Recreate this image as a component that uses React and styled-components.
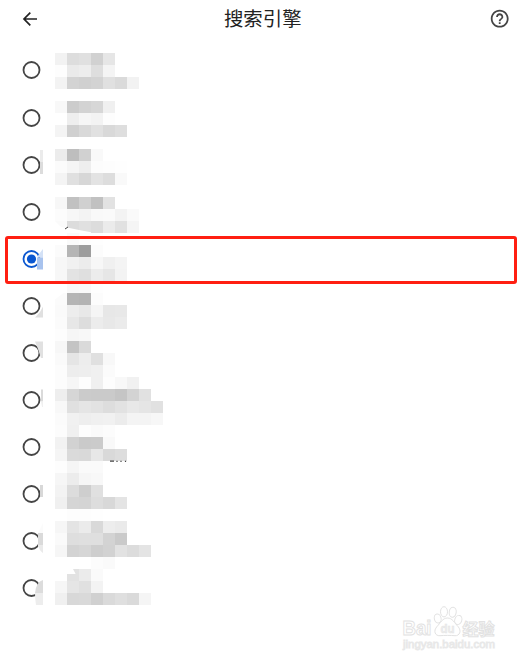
import styled, { createGlobalStyle } from 'styled-components';
import { MdHelpOutline } from 'react-icons/md';

const GlobalStyle = createGlobalStyle`
  body {
    margin: 0;
    background: #fff;
    font-family: 'Noto Sans CJK SC', sans-serif;
  }
`;

const Page = styled.main`
  position: relative;
  width: 525px;
  height: 663px;
  background: #fff;
  overflow: hidden;
`;

const Header = styled.header`
  display: grid;
  grid-template-columns: 24px 1fr 24px;
  align-items: center;
  height: 37px;
  padding: 0 13.5px 0 18px;
`;

const IconBtn = styled.button`
  display: flex;
  align-items: center;
  justify-content: center;
  padding: 0;
  border: none;
  background: transparent;
  color: ${(p) => p.$color};
`;

const Title = styled.h1`
  margin: 0 4px 2px 0;
  text-align: center;
  font-size: 19.4px;
  font-weight: 400;
  line-height: 34px;
  color: #222;
`;

const Content = styled.div`
  display: grid;
  grid-template-columns: 23px 108px;
  column-gap: 12px;
  align-items: start;
  padding: 9.5px 0 0 20px;
`;

const Options = styled.ul`
  margin: 0;
  padding: 0.4px 0 0;
  list-style: none;
`;

const Option = styled.li`
  display: flex;
  align-items: center;
  height: 47.1px;
`;

const RadioSvg = styled.svg`
  display: block;
  width: 23px;
  height: 24px;
  overflow: visible;
`;

const Mosaic = styled.div`
  display: grid;
  grid-template-columns: repeat(9, 12px);
  grid-auto-rows: 12px;
  margin-top: 6.5px;
`;

const Cell = styled.span`
  background: ${(p) => p.$tone};
  clip-path: ${(p) => p.$clip || 'none'};
`;

const Highlight = styled.div`
  position: absolute;
  top: 236px;
  left: 5px;
  box-sizing: border-box;
  width: 512px;
  height: 48px;
  border: 3px solid #ff1f12;
  border-radius: 3px;
`;

const Scraps = styled.svg`
  position: absolute;
  top: ${(p) => p.$top}px;
  left: ${(p) => p.$left}px;
`;

const Watermark = styled.svg`
  position: absolute;
  top: 602px;
  left: 398px;
  font-family: 'Liberation Sans', 'Noto Sans CJK SC', sans-serif;
`;

// shapes left over each radio, [path, fill]
const options = [
  [],
  [],
  [['M20-3H23V9H20z', '#ebebeb'], ['M20 9H23V21H20z', '#dcdcdc']],
  [],
  [['M23 2L19 7L17 10.5H23z', '#d3e1f6'], ['M17 10.5H23V22.5H17z', '#a8c3ee']],
  [['M23 12.5L20 18L15 23.5H23z', '#e0e0e0']],
  [['M15 .5H23V17H21L18 8z', '#e1e1e1']],
  [['M21 1.5H23V13.5H21z', '#dadada'], ['M21 13.5H23V19H22z', '#f0f0f0']],
  [],
  [['M20 3H23V15H20z', '#d8d8d8']],
  [['M18 4L23-6V24L20 21L18 16z', '#fbfbfb'], ['M18 4H23V16H18z', '#dadada'], ['M18 16H23V24Q19 21 18 16z', '#eaeaea']],
  [['M23 4Q16 6 15 17H23z', '#dcdcdc'], ['M15 17H23V29H16Q15 23 15 17z', '#ededed']],
];

const tones = [
  'f2 dd e0 d1 e6',
  'fd ea ed de f4',
  'f3 d3 d0 d3 e0 da f2',
  '',
  'f8 cc d3 d7 f0',
  'ff ee f6 f3 fd',
  'f4 d0 d9 e1 d9 de',
  '',
  'ec be d1 f9',
  'fb f5 ee fc fd fe',
  'f4 e0 d7 e3 dd f9',
  '',
  'f7 c1 d0 c1 e2',
  'fc f7 f3 f9 fa f3 fa',
  'fa dc e0 dc eb e1 f5',
  'ff fa fd fe',
  'fb b5 9d fc',
  'f7 f1 ec f7 f0 f4',
  'f7 e3 df ec e6 f3',
  'ff f8 f9 fe',
  'fb b5 b3 fc',
  'fa ed e8 f5 e7 e8',
  'fb e7 dd ec e8 eb',
  'fd f6 f8',
  'f7 c4 da',
  'fa e5 ed e0 f8',
  'fc ed ee f0 fb',
  'fc f6 fd f0 fd f8 f1',
  'ee d6 cb ca ca c5 d3 e1',
  'f8 e0 e5 e2 dd e2 e8 e5 e1',
  'fb f1 ee f0 f1 ec f4 f4 f7',
  'fc f0 fd fa fc',
  'f2 d2 ca cb f9',
  'f5 da d9 e7 d9 dd',
  'fd f5 fa fa',
  'f6 ec f6 f8',
  'f3 dc ce e0',
  'f0 d5 d4 dd d8 e4',
  'ff fd fd fe',
  'f6 e4 eb d9 ed ea',
  'fa de df df d3 ca',
  'f6 d3 d6 ce d2 e2 dc e4',
  'ff ff ff fc fa',
  'ff e2 eb fa',
  'f6 e5 e0 f3',
  'f0 d8 d9 d0 da df da f5',
];

const clips = {
  '14-0': 'polygon(0 0, 100% 0, 100% 65%, 45% 45%)',
  '14-1': 'polygon(0 0, 100% 0, 100% 75%, 0 55%)',
  '14-2': 'polygon(0 0, 100% 0, 100% 94%, 0 75%)',
  '20-0': 'polygon(70% 0, 100% 0, 100% 100%, 0 100%, 0 55%)',
  '43-1': 'polygon(50% 0, 100% 0, 100% 100%, 0 100%, 0 42%, 72% 42%)',
};

const cells = tones.flatMap((row, r) =>
  Array.from({ length: 9 }, (_, c) => {
    const v = row.split(' ')[c];
    return { key: `${r}-${c}`, tone: v ? `#${v}${v}${v}` : 'transparent' };
  })
);

function Radio({ checked, marks }) {
  const color = checked ? '#0b57d0' : '#454545';
  return (
    <RadioSvg viewBox="0 0 23 24" role="radio" aria-checked={checked}>
      <circle cx="11.5" cy="12" r="8" fill="none" stroke={color} strokeWidth="1.8" />
      {checked && <circle cx="11.5" cy="12" r="4.6" fill={color} />}
      {marks.map(([d, fill]) => (
        <path key={d} d={d} fill={fill} />
      ))}
    </RadioSvg>
  );
}

function BaiduMark() {
  return (
    <Watermark width="102" height="52" viewBox="0 0 102 52" aria-hidden="true">
      <g fill="#fff" stroke="#e2e2e2" strokeWidth="1">
        <text x="4.500" y="33" fontSize="21" fontWeight="700" textLength="29" lengthAdjust="spacingAndGlyphs">Bai</text>
        <ellipse cx="39.7" cy="16.500" rx="3.4" ry="4.6" transform="rotate(-12 39.7 16.5)" />
        <ellipse cx="46" cy="9.800" rx="3.5" ry="5.1" />
        <ellipse cx="54.700" cy="10.200" rx="3.5" ry="5" transform="rotate(8 54.7 10.2)" />
        <ellipse cx="60.300" cy="18" rx="3.5" ry="4.7" transform="rotate(18 60.3 18)" />
        <path d="M49.500 16C54.500 16 56.500 21 60 24.500C64 29 61.500 34 57 33.700C53 33.300 46 33.300 42 33.700C37 34 35 29 39 24.500C42.500 21 44.500 16 49.500 16z" />
        <text x="42.500" y="31" fontSize="13" fontWeight="700" textLength="14" lengthAdjust="spacingAndGlyphs" fill="#eee" stroke="#e4e4e4" strokeWidth=".5">du</text>
        <text x="64.500" y="32.500" fontSize="16" fontWeight="700">经验</text>
      </g>
      <text x="5" y="45.500" fontSize="10" fill="#fff" stroke="#e8e8e8" strokeWidth=".8" textLength="92" lengthAdjust="spacingAndGlyphs">jingyan.baidu.com</text>
    </Watermark>
  );
}

export default function App() {
  return (
    <Page>
      <GlobalStyle />
      <Header>
        <IconBtn type="button" aria-label="返回" $color="#222">
          <svg width="24" height="24" viewBox="0 0 24 24" fill="none" stroke="currentColor" strokeWidth="1.7">
            <path d="M19 12H6M12.300 5.700L6 12L12.300 18.300" />
          </svg>
        </IconBtn>
        <Title>搜索引擎</Title>
        <IconBtn type="button" aria-label="帮助" $color="#444">
          <MdHelpOutline size={21.4} />
        </IconBtn>
      </Header>
      <Content>
        <Options role="radiogroup">
          {options.map((marks, i) => (
            <Option key={i}>
              <Radio checked={i === 4} marks={marks} />
            </Option>
          ))}
        </Options>
        <Mosaic>
          {cells.map(({ key, tone }) => (
            <Cell key={key} $tone={tone} $clip={clips[key]} />
          ))}
        </Mosaic>
      </Content>
      <Scraps $top={225} $left={64} width="6" height="5">
        <path d="M1 4L4 2" stroke="#444" strokeWidth="1" />
      </Scraps>
      <Scraps $top={460} $left={109} width="19" height="3">
        <path d="M1 1.200H5M8 .8V2M12 .8V2M16.500 .8V2" stroke="#444" strokeWidth="1.200" />
      </Scraps>
      <Highlight />
      <BaiduMark />
    </Page>
  );
}
